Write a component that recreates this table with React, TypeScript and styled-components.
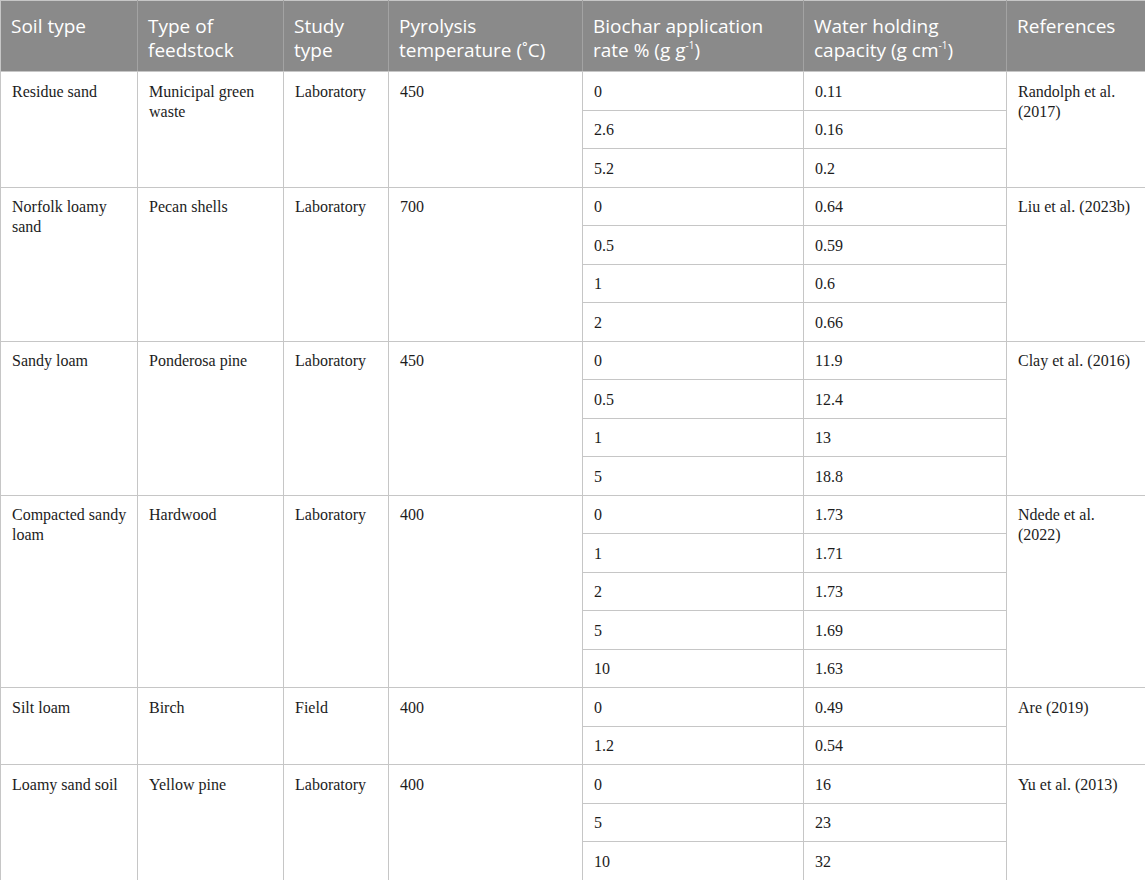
import React from "react";
import styled, { createGlobalStyle } from "styled-components";

const Global = createGlobalStyle`
  html, body { margin: 0; padding: 0; background: #ffffff; }
  body { font-family: "Liberation Serif", "Times New Roman", serif; }
`;

const Table = styled.table`
  width: 1145px;
  border-collapse: collapse;
  table-layout: fixed;
  border: 1px solid #c6c6c6;
`;

const HeadCell = styled.th`
  background: #8a8a8a;
  color: #ffffff;
  font-family: "Open Sans", "Noto Sans", sans-serif;
  font-weight: 400;
  font-size: 19px;
  line-height: 24px;
  text-align: left;
  vertical-align: top;
  padding: 13px 8px 9px 10px;
  border-left: 1px solid #a3a3a3;
  border-right: 1px solid #a3a3a3;
  border-bottom: 1px solid #c6c6c6;
  &:first-child { border-left: 1px solid #c6c6c6; }
  &:last-child { border-right: 1px solid #c6c6c6; }
`;

const Sup = styled.sup`
  font-size: 10px;
  line-height: 0;
  vertical-align: 8px;
`;

const Cell = styled.td`
  font-size: 16px;
  line-height: 20px;
  color: #1c1c1c;
  vertical-align: top;
  text-align: left;
  padding: 9.5px 7px 8px 11px;
  border: 1px solid #c6c6c6;
`;

type Group = {
  soil: string;
  feed: string;
  study: string;
  temp: string;
  ref: string;
  rows: [string, string][];
};

const data: Group[] = [
  {
    soil: "Residue sand",
    feed: "Municipal green waste",
    study: "Laboratory",
    temp: "450",
    ref: "Randolph et al. (2017)",
    rows: [
      ["0", "0.11"],
      ["2.6", "0.16"],
      ["5.2", "0.2"],
    ],
  },
  {
    soil: "Norfolk loamy sand",
    feed: "Pecan shells",
    study: "Laboratory",
    temp: "700",
    ref: "Liu et al. (2023b)",
    rows: [
      ["0", "0.64"],
      ["0.5", "0.59"],
      ["1", "0.6"],
      ["2", "0.66"],
    ],
  },
  {
    soil: "Sandy loam",
    feed: "Ponderosa pine",
    study: "Laboratory",
    temp: "450",
    ref: "Clay et al. (2016)",
    rows: [
      ["0", "11.9"],
      ["0.5", "12.4"],
      ["1", "13"],
      ["5", "18.8"],
    ],
  },
  {
    soil: "Compacted sandy loam",
    feed: "Hardwood",
    study: "Laboratory",
    temp: "400",
    ref: "Ndede et al. (2022)",
    rows: [
      ["0", "1.73"],
      ["1", "1.71"],
      ["2", "1.73"],
      ["5", "1.69"],
      ["10", "1.63"],
    ],
  },
  {
    soil: "Silt loam",
    feed: "Birch",
    study: "Field",
    temp: "400",
    ref: "Are (2019)",
    rows: [
      ["0", "0.49"],
      ["1.2", "0.54"],
    ],
  },
  {
    soil: "Loamy sand soil",
    feed: "Yellow pine",
    study: "Laboratory",
    temp: "400",
    ref: "Yu et al. (2013)",
    rows: [
      ["0", "16"],
      ["5", "23"],
      ["10", "32"],
    ],
  },
];

const widths = [137, 146, 105, 194, 221, 203, 139];

export default function App() {
  return (
    <>
      <Global />
      <Table>
        <colgroup>
          {widths.map((w, i) => (
            <col key={i} style={{ width: w }} />
          ))}
        </colgroup>
        <thead>
          <tr>
            <HeadCell>Soil type</HeadCell>
            <HeadCell>Type of feedstock</HeadCell>
            <HeadCell>Study type</HeadCell>
            <HeadCell>Pyrolysis temperature (˚C)</HeadCell>
            <HeadCell>
              Biochar application rate % (g g<Sup>-1</Sup>)
            </HeadCell>
            <HeadCell>
              Water holding capacity (g cm<Sup>-1</Sup>)
            </HeadCell>
            <HeadCell>References</HeadCell>
          </tr>
        </thead>
        <tbody>
          {data.map((g, gi) =>
            g.rows.map((r, ri) => (
              <tr key={`${gi}-${ri}`}>
                {ri === 0 && (
                  <>
                    <Cell rowSpan={g.rows.length}>{g.soil}</Cell>
                    <Cell rowSpan={g.rows.length}>{g.feed}</Cell>
                    <Cell rowSpan={g.rows.length}>{g.study}</Cell>
                    <Cell rowSpan={g.rows.length}>{g.temp}</Cell>
                  </>
                )}
                <Cell>{r[0]}</Cell>
                <Cell>{r[1]}</Cell>
                {ri === 0 && <Cell rowSpan={g.rows.length}>{g.ref}</Cell>}
              </tr>
            ))
          )}
        </tbody>
      </Table>
    </>
  );
}
